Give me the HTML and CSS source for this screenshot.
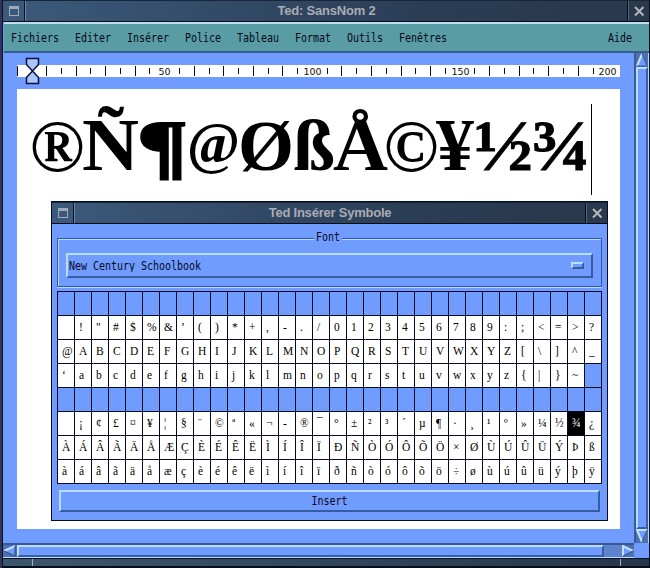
FILE: index.html
```html
<!DOCTYPE html>
<html lang="fr">
<head>
<meta charset="utf-8">
<title>Ted: SansNom 2</title>
<link rel="stylesheet" href="styles.css">
</head>
<body>
<div class="window">
  <header class="titlebar">
    <div class="tb-menu"><i class="menu-glyph"></i></div>
    <div class="tb-title">Ted: SansNom 2</div>
    <div class="tb-close"><svg width="12" height="12" viewBox="0 0 12 12"><path d="M2 2L10.500 10.500M10.500 2L2 10.500"/></svg></div>
  </header>
  <nav class="menubar">
    <span class="fixed">Fichiers</span><span class="fixed">Editer</span><span class="fixed">Insérer</span><span class="fixed">Police</span><span class="fixed">Tableau</span><span class="fixed">Format</span><span class="fixed">Outils</span><span class="fixed">Fenêtres</span><span class="fixed help">Aide</span>
  </nav>
  <div class="body">
    <main class="work">
      <svg class="ruler" width="603" height="36" viewBox="17 53 603 36">
        <rect x="17" y="65" width="603" height="12" fill="#fff"/>
        <g id="ticks"></g>
        <path class="marker" d="M26.500 58.500H38.500V64.500L26.500 77.500V83.500H38.500V77.500L26.500 64.500Z"/>
      </svg>
      <div class="page">
        <svg class="sample" width="603" height="112" viewBox="17 89 603 112">
          <text x="29.500" y="170.500" font-size="73" textLength="55" lengthAdjust="spacingAndGlyphs">®</text>
          <text x="82" y="170" font-size="74" textLength="57" lengthAdjust="spacingAndGlyphs">Ñ</text>
          <text class="heavy" x="137" y="170" font-size="72" textLength="51" lengthAdjust="spacingAndGlyphs">¶</text>
          <text x="187" y="163" font-size="59" textLength="53" lengthAdjust="spacingAndGlyphs">@</text>
          <text x="238" y="170" font-size="72" textLength="56" lengthAdjust="spacingAndGlyphs">Ø</text>
          <text x="293" y="170" font-size="71" textLength="42" lengthAdjust="spacingAndGlyphs">ß</text>
          <text x="333" y="170" font-size="74" textLength="55" lengthAdjust="spacingAndGlyphs">Å</text>
          <text x="383.500" y="170.500" font-size="73" textLength="55" lengthAdjust="spacingAndGlyphs">©</text>
          <text x="436" y="170" font-size="73" textLength="38" lengthAdjust="spacingAndGlyphs">¥</text>
          <text class="semi" x="474" y="170" font-size="71" textLength="59" lengthAdjust="spacingAndGlyphs">½</text>
          <text class="semi" x="531" y="170" font-size="71" textLength="59" lengthAdjust="spacingAndGlyphs">¾</text>
          <path class="caret" d="M591.500 104V195"/>
        </svg>
      </div>
    </main>
    <div class="vscroll">
      <svg width="12" height="14" viewBox="0 0 12 14"><rect width="12" height="14" fill="#526fb4"/><path d="M6 1L11 13H1Z" fill="#719cff"/><path d="M6 1L1 13" stroke="#c2e1ff" stroke-width="2"/><path d="M6 1L11 13H1" stroke="#395f9e" fill="none"/></svg>
      <div class="thumb"></div>
      <svg width="12" height="14" viewBox="0 0 12 14"><rect width="12" height="14" fill="#526fb4"/><path d="M1 1H11L6 13Z" fill="#719cff"/><path d="M6 13L1 1H11" stroke="#c2e1ff" stroke-width="2" fill="none"/><path d="M11 1L6 13" stroke="#395f9e"/></svg>
    </div>
  </div>
  <div class="hrow">
    <div class="hscroll">
      <svg width="14" height="12" viewBox="0 0 14 12"><rect width="14" height="12" fill="#526fb4"/><path d="M1 6L12 1V11Z" fill="#719cff"/><path d="M12 1L1 6" stroke="#c2e1ff" stroke-width="2"/><path d="M1 6L12 11V1" stroke="#304b80" fill="none"/></svg>
      <div class="thumb"></div>
      <div class="trough"></div>
      <svg width="12" height="12" viewBox="0 0 12 12"><rect width="12" height="12" fill="#526fb4"/><path d="M1 1L11 6L1 11Z" fill="#719cff"/><path d="M11 6L1 1V11" stroke="#c2e1ff" stroke-width="2" fill="none"/><path d="M1 11L11 6" stroke="#304b80"/></svg>
    </div>
  </div>
  <footer class="frame"><i></i><i></i></footer>

  <section class="dialog">
    <header class="titlebar">
      <div class="tb-menu"><i class="menu-glyph"></i></div>
      <div class="tb-title">Ted Insérer Symbole</div>
      <div class="tb-close"><svg width="12" height="12" viewBox="0 0 12 12"><path d="M2 2L10.500 10.500M10.500 2L2 10.500"/></svg></div>
    </header>
    <div class="content">
      <div class="group">
        <div class="legend"><span class="fixed">Font</span></div>
        <div class="option"><span class="fixed">New Century Schoolbook</span><i></i></div>
      </div>
      <div class="symbols" id="symbols"></div>
      <div class="insert"><span class="fixed">Insert</span></div>
    </div>
  </section>
</div>
<script src="script.js"></script>
</body>
</html>
```
FILE: styles.css
```css
* { box-sizing: border-box; }
body { margin: 0; overflow: hidden; background: #202638; }
svg { display: block; flex: none; }
.window {
  position: relative; width: 650px; height: 568px; padding-left: 3px;
  display: flex; flex-direction: column; overflow: hidden;
  background: linear-gradient(90deg, #2f3655 0 2px, #0c1126 2px 3px, #719cff 3px);
  border-right: 1px solid #090d20;
}
.fixed {
  display: inline-block; font: 10px/13px "DejaVu Sans Mono", "Liberation Mono", monospace;
  letter-spacing: -0.02px; transform: scaleY(1.18); white-space: pre; color: #05081c;
}
.titlebar {
  height: 22px; flex: none; display: flex; color: #a9abb3;
  background: linear-gradient(90deg, #3c5a7b, #2a3d55 65%, #29384c);
  border-bottom: 1px solid #050a18; border-top: 1px solid #18263a;
}
.tb-menu { width: 22px; border-right: 1px solid #091024; display: flex; align-items: center; justify-content: center; }
.tb-title {
  flex: 1; border-left: 1px solid #6889aa; text-align: center;
  font: bold 13px/20px "Liberation Sans", Arial, sans-serif; letter-spacing: -0.22px;
}
.menu-glyph { width: 10px; height: 10px; border: 1px solid #a1a9b7; border-top-width: 3px; }
.tb-close { width: 22px; border-left: 1px solid #050a18; box-shadow: inset 1px 0 #526779; display: flex; align-items: center; justify-content: center; }
.tb-close path { stroke: #b5b7bb; stroke-width: 2; }
.menubar {
  height: 31px; flex: none; margin: 0 0 0 1px; padding: 0 17px 0 7px;
  display: flex; align-items: center; gap: 16px;
  background: #5a9ca4; border-top: 2px solid #bedff2; border-bottom: 2px solid #375d91;
}
.help { margin-left: auto; }
.body { height: 490px; flex: none; display: flex; justify-content: space-between; }
.work { width: 617px; padding-left: 14px; }
.marker { fill: #a9c6ff; stroke: #08103a; stroke-width: 1.5; }
#ticks path { stroke: #111; stroke-width: 1; }
#ticks text { font: 9.500px "DejaVu Sans", sans-serif; fill: #111; }
.page { height: 440px; background: #fff; }
.sample { font-family: "Liberation Serif", "Times New Roman", serif; font-weight: bold; fill: #000; }
.heavy { stroke: #000; stroke-width: 2; }
.semi { stroke: #000; stroke-width: 0.9; }
.caret { stroke: #000; }
.vscroll {
  width: 15px; display: flex; flex-direction: column;
  border-left: 2px solid #3a5c95; border-right: 1px solid #b8daff; background: #526fb4;
}
.thumb { flex: 1; background: #719cff; border: 2px solid #3a5f9f; border-top-color: #b9dcff; border-left-color: #b9dcff; }
.hrow { height: 15px; flex: none; }
.hscroll { height: 15px; width: 631px; display: flex; background: #526fb4; border-top: 2px solid #3a5790; border-bottom: 1px solid #b9dcff; }
.trough { width: 18px; background: #5e82ce; }
.frame {
  height: 10px; flex: none; display: flex; justify-content: space-between; padding: 0 28px 0 29px;
  background: linear-gradient(90deg, #3b576e, #263649); border-top: 1px solid #0a1028; border-bottom: 2px solid #080e1c;
}
.frame i { width: 1px; background: #9ab0c5; }
.dialog { position: absolute; left: 51px; top: 201px; width: 557px; height: 320px; background: #719cff; border: 1px solid #070c25; }
.content { padding: 7px 5px 0; }
.group { position: relative; height: 56px; margin-bottom: 4px; padding: 22px 9px 0; }
.group::before {
  content: ""; position: absolute; inset: 7px 0 0; border: 1px solid #31599c;
  box-shadow: inset 1px 1px #b7d8ff, 0 1px #b7d8ff;
}
.legend { position: absolute; left: 257px; top: -1px; width: 28px; height: 14px; background: #719cff; text-align: center; line-height: 13px; display: flex; justify-content: center; }
.option {
  position: relative; height: 25px; padding: 0 7px 0 1px; display: flex; align-items: center; justify-content: space-between;
  border: 2px solid #355da2; border-top-color: #b9dcff; border-left-color: #b9dcff;
}
.option i { width: 13px; height: 7px; border: 2px solid #355da2; border-top-color: #b9dcff; border-left-color: #b9dcff; }
.symbols {
  display: grid; grid-template-columns: repeat(32, 17px); grid-auto-rows: 24px;
  width: 545px; border-top: 1px solid #050a22; border-left: 1px solid #050a22;
}
.cell {
  background: #fff; border-right: 1px solid #050a22; border-bottom: 1px solid #050a22;
  padding-left: 4px; white-space: pre; overflow: hidden; color: #000;
  font: 11.500px/22px "Liberation Serif", "Times New Roman", serif;
}
.blank { background: #719cff; }
.selected { background: #000; color: #fff; }
.insert {
  height: 22px; margin: 6px 2px 0 2px; padding-bottom: 1px; display: flex; align-items: center; justify-content: center;
  border: 2px solid #355da2; border-top-color: #b9dcff; border-left-color: #b9dcff;
}
```
FILE: script.js
```js
// Latin-1 table: 32 characters per row, control codes stay blank.
const grid = document.getElementById('symbols');
for (let code = 0; code < 256; code++) {
  const cell = document.createElement('div');
  const blank = code < 32 || (code > 126 && code < 160);
  cell.className = 'cell' + (blank ? ' blank' : '') + (code === 190 ? ' selected' : '');
  let ch = String.fromCharCode(code);
  if (code === 39) ch = '’';
  if (code === 96) ch = '‘';
  if (code === 173) ch = '-';
  if (!blank) cell.textContent = ch;
  grid.appendChild(cell);
}

// Ruler: one mark every 5 mm, a number every 50 mm.
const ns = 'http://www.w3.org/2000/svg';
const ticks = document.getElementById('ticks');
for (let i = 0; i <= 40; i++) {
  const x = Math.floor(17 + i * 14.77) + 0.5;
  if (i === 1) continue;
  if (i && i % 10 === 0) {
    const label = document.createElementNS(ns, 'text');
    label.setAttribute('x', i === 40 ? 607.5 : x);
    label.setAttribute('y', 75);
    label.setAttribute('text-anchor', 'middle');
    label.textContent = i * 5;
    ticks.appendChild(label);
  } else {
    const mark = document.createElementNS(ns, 'path');
    mark.setAttribute('d', i % 2 ? `M${x} 68V74` : `M${x} 66V76`);
    ticks.appendChild(mark);
  }
}
```
